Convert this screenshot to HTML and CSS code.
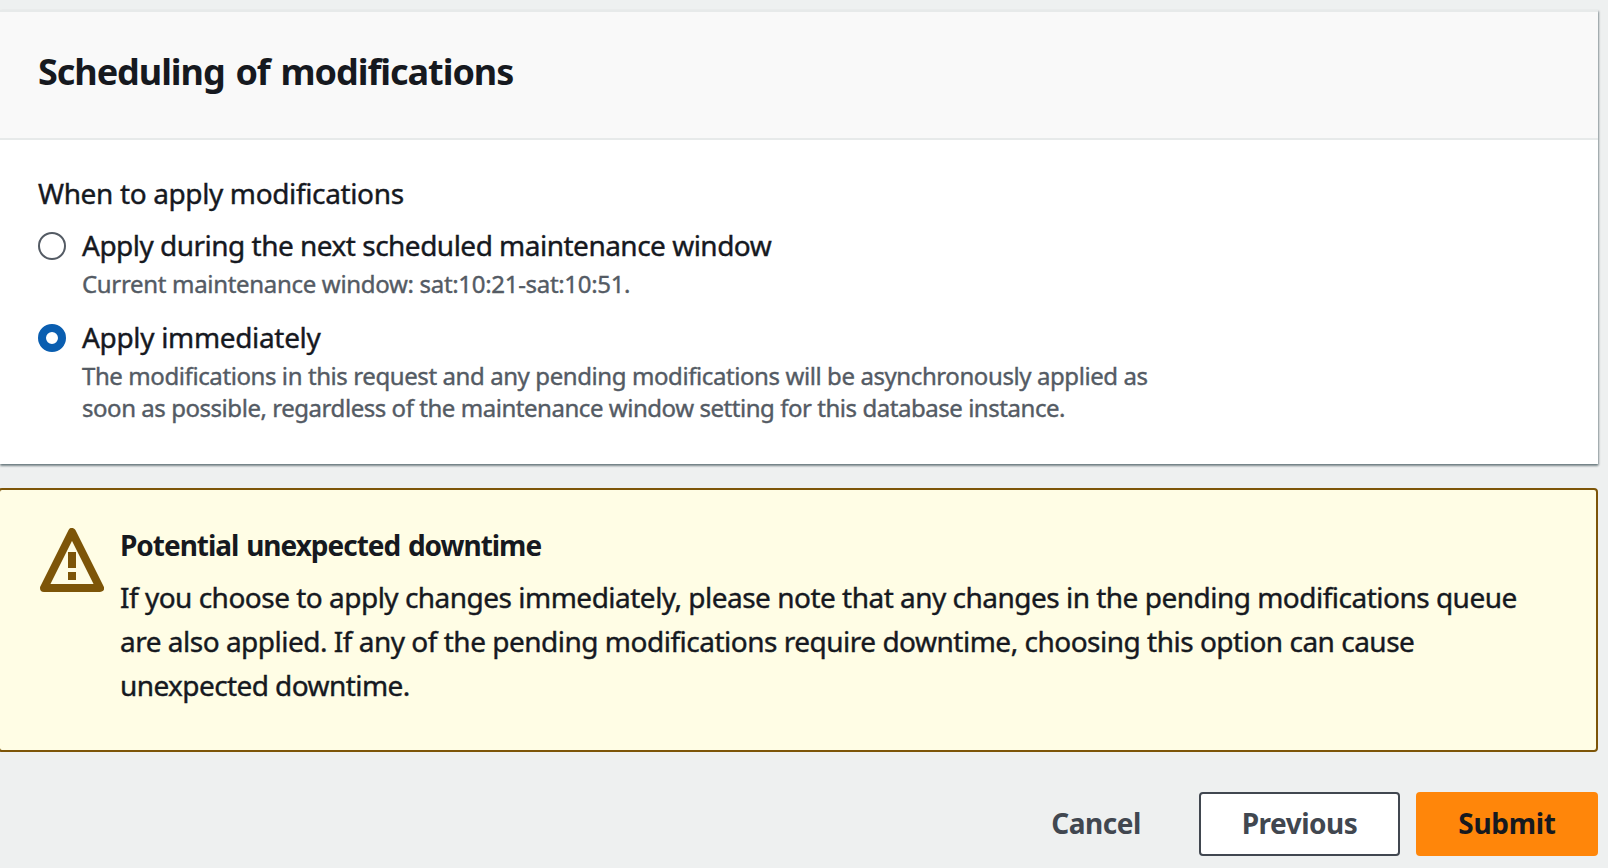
FILE: index.html
```html
<!DOCTYPE html>
<html lang="en">
<head>
<meta charset="utf-8">
<title>Scheduling of modifications</title>
<link rel="stylesheet" href="styles.css">
</head>
<body>
<main class="page">
  <section class="card">
    <header class="card-header"><h2 class="card-title">Scheduling of modifications</h2></header>
    <div class="card-body">
      <div class="field-label">When to apply modifications</div>
      <label class="option">
        <span class="radio"></span>
        <span class="option-text">
          <span class="option-label window-label">Apply during the next scheduled maintenance window</span>
          <span class="option-hint window-hint">Current maintenance window: sat:10:21-sat:10:51.</span>
        </span>
      </label>
      <label class="option">
        <span class="radio radio-checked"></span>
        <span class="option-text">
          <span class="option-label now-label">Apply immediately</span>
          <span class="option-hint">The modifications in this request and any pending modifications will be asynchronously applied as<br><span class="hint-end">soon as possible, regardless of the maintenance window setting for this database instance.</span></span>
        </span>
      </label>
    </div>
  </section>
  <section class="alert">
    <svg class="alert-icon" viewBox="0 0 16 16" width="64" height="64">
      <path d="M8 1 15 15H1Z" fill="none" stroke="currentColor" stroke-width="2" stroke-linejoin="round"/>
      <path d="M7 6h2v4H7zM7 11h2v2H7z" fill="currentColor"/>
    </svg>
    <div class="alert-content">
      <div class="alert-title">Potential unexpected downtime</div>
      <div class="alert-text">If you choose to apply changes immediately, please note that any changes in the pending modifications queue<br><span class="alert-middle">are also applied. If any of the pending modifications require downtime, choosing this option can cause</span><br><span class="alert-end">unexpected downtime.</span></div>
    </div>
  </section>
  <footer class="actions">
    <button class="btn btn-link" type="button">Cancel</button>
    <button class="btn btn-normal" type="button">Previous</button>
    <button class="btn btn-primary" type="button">Submit</button>
  </footer>
</main>
</body>
</html>
```
FILE: styles.css
```css
* { box-sizing: border-box; }
body {
  margin: 0;
  height: 868px;
  overflow: hidden;
  background: #eef0f0;
  color: #16191f;
  font: 400 28px/44px "Noto Sans", sans-serif;
  white-space: nowrap;
}
.page { width: 1598px; padding-top: 10px; }
.card {
  height: 454px;
  background: #fff;
  border-top: 2px solid #e7eaea;
  box-shadow: 0 2px 2px rgba(0, 28, 36, 0.4), 1px 1px 2px rgba(0, 28, 36, 0.3);
}
.card-header {
  height: 128px;
  padding: 38px 38px 0;
  background: #f9f9f9;
  border-bottom: 2px solid #e7eaea;
}
.card-title {
  margin: 0;
  font-size: 36px;
  font-weight: 700;
  line-height: 44px;
  letter-spacing: -1.05px;
  word-spacing: 2.5px;
}
.card-body { padding: 33px 38px 0; }
.field-label {
  margin-bottom: 12px;
  line-height: 40px;
  letter-spacing: -0.365px;
  -webkit-text-stroke: 0.4px currentColor;
}
.option { display: flex; gap: 16px; margin-bottom: 17px; }
.radio {
  width: 28px;
  height: 28px;
  margin-top: 7px;
  border: 2px solid #545b64;
  border-radius: 50%;
  background: #fff;
}
.radio-checked { border: 8px solid #0a5eb0; }
.option-text { display: flex; flex-direction: column; gap: 3px; }
.option-label { line-height: 40px; -webkit-text-stroke: 0.4px currentColor; }
.window-label { letter-spacing: -0.51px; }
.now-label { letter-spacing: -0.33px; }
.option-hint {
  color: #545b64;
  font-size: 24px;
  line-height: 32px;
  letter-spacing: -0.41px;
  -webkit-text-stroke: 0.4px currentColor;
}
.window-hint { letter-spacing: -0.315px; }
.hint-end { letter-spacing: -0.455px; }
.alert {
  display: flex;
  gap: 16px;
  height: 264px;
  margin: 24px 0 40px -2px;
  padding: 33px 38px 0 40px;
  border: 2px solid #7d5508;
  border-radius: 4px;
  background: #fffde5;
}
.alert-icon { flex: none; margin-top: 5px; color: #7d5508; }
.alert-title { margin-bottom: 8px; font-weight: 700; letter-spacing: -1.02px; word-spacing: 1.5px; }
.alert-text { letter-spacing: -0.508px; -webkit-text-stroke: 0.4px currentColor; }
.alert-middle { letter-spacing: -0.495px; }
.alert-end { letter-spacing: -0.58px; }
.actions { display: flex; justify-content: flex-end; gap: 16px; }
.btn {
  height: 64px;
  padding: 0 0 2px;
  border: 2px solid transparent;
  border-radius: 4px;
  background: transparent;
  color: #414750;
  font: 700 28px/44px "Noto Sans", sans-serif;
  letter-spacing: -0.5px;
}
.btn-link { width: 174px; }
.btn-normal { width: 201px; background: #fff; border-color: #414750; }
.btn-primary { width: 182px; background: #ff860a; color: #16191f; letter-spacing: -0.3px; }
```
